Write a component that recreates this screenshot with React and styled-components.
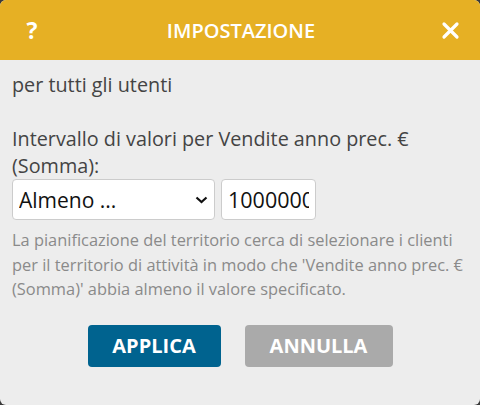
import styled, { createGlobalStyle } from 'styled-components';

const GlobalStyle = createGlobalStyle`
  html, body {
    margin: 0;
    background: #3a3a3a;
  }
  * {
    box-sizing: border-box;
  }
`;

const Dialog = styled.div`
  width: 480px;
  height: 405px;
  border-radius: 6px;
  overflow: hidden;
  background: #ededed;
  font-family: 'Open Sans', 'Liberation Sans', sans-serif;
  display: flex;
  flex-direction: column;
`;

const Header = styled.div`
  height: 60px;
  background: #e6b024;
  color: #fff;
  display: flex;
  align-items: center;
  justify-content: space-between;
  padding: 0 20px 0 22px;
`;

const HeaderIcon = styled.button`
  border: none;
  background: none;
  color: #fff;
  padding: 0;
  width: 20px;
  font: 700 23px 'Open Sans', sans-serif;
  display: flex;
  align-items: center;
  justify-content: center;
`;

const Title = styled.h1`
  margin: 0;
  font-size: 20px;
  font-weight: 600;
`;

const Body = styled.div`
  flex: 1;
  padding: 11px 12px 0;
  color: #444;
  font-size: 19.8px;
  line-height: 27px;
`;

const Paragraph = styled.p`
  margin: 0 0 27px;
`;

const Label = styled.div``;

const Controls = styled.div`
  display: flex;
  gap: 6px;
`;

const SelectWrap = styled.div`
  position: relative;
  width: 203px;
  height: 41px;
`;

const Select = styled.select`
  appearance: none;
  width: 100%;
  height: 100%;
  border: 1px solid #ccc;
  border-radius: 4px;
  background: #fff;
  color: #111;
  font: 400 21px 'Open Sans', sans-serif;
  padding: 0 28px 0 6px;
`;

const Chevron = styled.svg`
  position: absolute;
  right: 7px;
  top: 17px;
  pointer-events: none;
`;

const NumberInput = styled.input`
  width: 95px;
  height: 41px;
  border: 1px solid #ccc;
  border-radius: 4px;
  background: #fff;
  color: #111;
  font: 400 21.5px 'Open Sans', sans-serif;
  padding: 0 6px;
`;

const Help = styled.p`
  margin: 8px 0 0;
  color: #8a8a8a;
  font-size: 16.4px;
  line-height: 24.5px;
`;

const Actions = styled.div`
  display: flex;
  justify-content: center;
  gap: 24px;
  margin-top: 23px;
`;

const Button = styled.button`
  width: ${p => p.$width}px;
  height: 42px;
  border: none;
  border-radius: 4px;
  background: ${p => (p.$primary ? '#00638f' : '#aaaaaa')};
  color: #fff;
  font: 700 20px 'Open Sans', sans-serif;
`;

function CloseIcon() {
  return (
    <svg width="19" height="19" viewBox="0 0 19 19">
      <path d="M3 3 L16 16 M16 3 L3 16" stroke="#fff" strokeWidth="3.2" strokeLinecap="round" />
    </svg>
  );
}

export default function App() {
  return (
    <>
      <GlobalStyle />
      <Dialog>
        <Header>
          <HeaderIcon>?</HeaderIcon>
          <Title>IMPOSTAZIONE</Title>
          <HeaderIcon>
            <CloseIcon />
          </HeaderIcon>
        </Header>
        <Body>
          <Paragraph>per tutti gli utenti</Paragraph>
          <Label>Intervallo di valori per Vendite anno prec. € (Somma):</Label>
          <Controls>
            <SelectWrap>
              <Select defaultValue="min">
                <option value="min">Almeno ...</option>
                <option value="max">Al massimo ...</option>
              </Select>
              <Chevron width="13" height="8" viewBox="0 0 13 8">
                <path d="M1.5 1.5 L6.5 6 L11.5 1.5" fill="none" stroke="#111" strokeWidth="2.2" />
              </Chevron>
            </SelectWrap>
            <NumberInput type="text" defaultValue="1000000" />
          </Controls>
          <Help>
            La pianificazione del territorio cerca di selezionare i clienti per il territorio di
            attività in modo che 'Vendite anno prec. € (Somma)' abbia almeno il valore specificato.
          </Help>
          <Actions>
            <Button $primary $width={133}>APPLICA</Button>
            <Button $width={148}>ANNULLA</Button>
          </Actions>
        </Body>
      </Dialog>
    </>
  );
}
